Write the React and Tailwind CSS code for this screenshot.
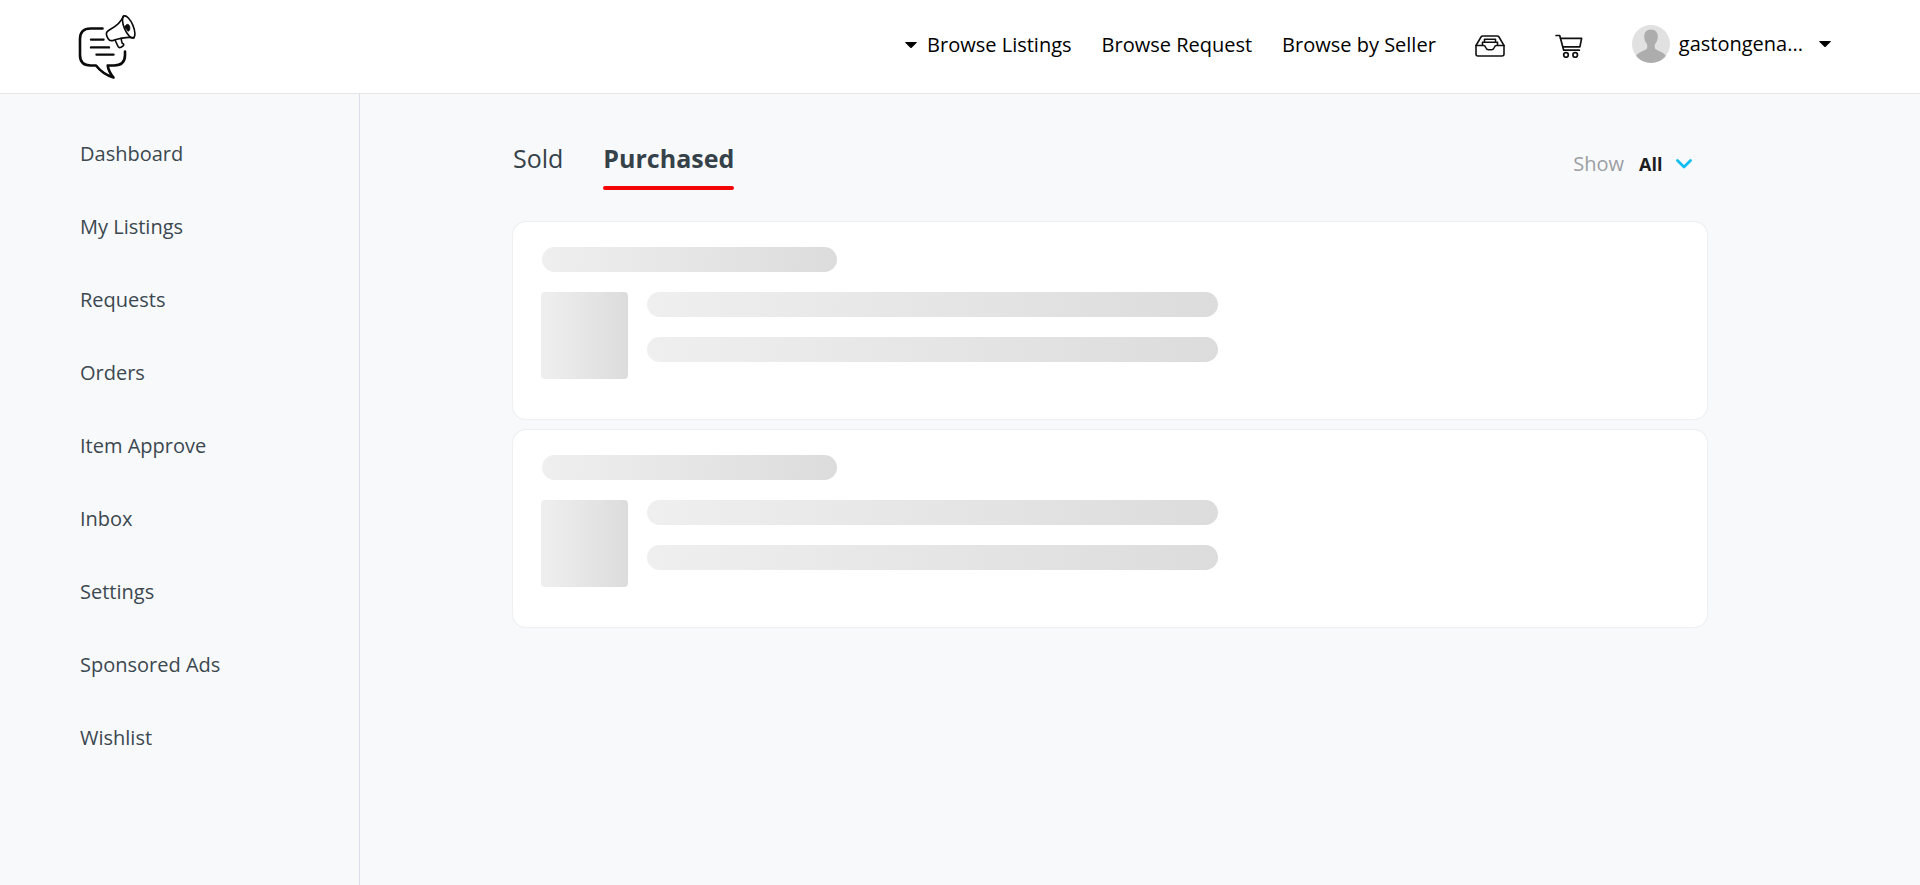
import React from "react";

const NAV = [
  "Dashboard",
  "My Listings",
  "Requests",
  "Orders",
  "Item Approve",
  "Inbox",
  "Settings",
  "Sponsored Ads",
  "Wishlist",
];

function Logo() {
  return (
    <svg viewBox="0 0 60 66" className="h-[66px] w-[60px]" fill="none" stroke="#0a0a0a" strokeLinecap="round" strokeLinejoin="round" aria-hidden="true">
      <path d="M24.5 15.5H12.5Q2 15.5 2 26V42Q2 52.5 12.5 52.5H18C23 59 29 62.5 35.5 64.5C32.5 61 30.3 57 29.7 52.5H36Q47 52.5 47 42V38.5" strokeWidth="2.6" />
      <path d="M13 26.6H25.5M13 34.4H31M18.5 41.6H35.5" strokeWidth="2.4" />
      <path d="M45.5 3C43 9.5 38.5 13 32.5 16.2C28.5 18.5 27.5 20 29 23.5C30.5 27.5 32 28 35.5 27.3C42 25.3 49 23.5 56 24.8" strokeWidth="1.7" />
      <ellipse cx="50.7" cy="13.9" rx="4.5" ry="11.8" transform="rotate(-23 50.7 13.9)" strokeWidth="1.6" />
      <path d="M37 27L40 33.3Q41 35.2 43 34.2L45 33Q46.3 32.2 45.5 30.8L44.3 30.4C43.6 28.7 43.3 27.3 43.2 25.3" strokeWidth="1.6" />
      <path d="M46.5 15C46.5 12.5 49.5 10 51 12C52.5 14 52.3 17.5 50.5 18.3C49.5 18.3 48.6 17 48 15.6Z" fill="#0a0a0a" strokeWidth="0.6" />
    </svg>
  );
}

function Caret() {
  return (
    <svg viewBox="0 0 12 6" className="h-[6px] w-[12px] shrink-0" fill="#000" aria-hidden="true">
      <path d="M0.5 0H11.5Q12 0.3 11.7 0.7L6.7 5.7Q6 6.2 5.3 5.7L0.3 0.7Q0 0.3 0.5 0Z" />
    </svg>
  );
}

function InboxIcon() {
  return (
    <svg viewBox="0 0 30 22" className="h-[22px] w-[30px]" fill="none" stroke="#111" strokeWidth="1.6" strokeLinejoin="round" strokeLinecap="round" aria-hidden="true">
      <path d="M1 10.5L6 2Q6.600 1 7.800 1H22.200Q23.400 1 24 2L29 10.500V19Q29 21 27 21H3Q1 21 1 19Z" />
      <path d="M1 10.500H8.500Q10 10.500 10.600 12.300Q11.500 14.700 13.500 14.700H16.500Q18.500 14.700 19.400 12.300Q20 10.500 21.500 10.500H29" />
      <path d="M9.500 4.200H20.500V7M9.500 4.200V7M7.500 10V7.200H22.500V10" />
    </svg>
  );
}

function CartIcon() {
  return (
    <svg viewBox="0 0 28 24" className="h-[24px] w-[28px]" fill="none" stroke="#111" strokeWidth="1.7" strokeLinejoin="round" strokeLinecap="round" aria-hidden="true">
      <path d="M1 1.500H4.700L8.700 16.200H24.300" />
      <path d="M5.600 4.300H26.600L24.900 12.900H7.800" />
      <circle cx="11" cy="21" r="2.300" />
      <circle cx="20.200" cy="21" r="2.300" />
    </svg>
  );
}

function Avatar() {
  return (
    <svg viewBox="0 0 38 38" className="h-[38px] w-[38px] rounded-full" aria-hidden="true">
      <rect width="38" height="38" fill="#e1e1e1" />
      <path d="M19 4.5C14.5 4.5 12 7.5 12.2 12C12.3 15.5 13.8 17.5 15.2 19.5V23C14.500 26 6 26 3.500 32V38H34.500V32C32 26 23.500 26 22.800 23V19.500C24.200 17.500 25.700 15.500 25.800 12C26 7.500 23.500 4.500 19 4.500Z" fill="#adadad" />
    </svg>
  );
}

function SkeletonCard() {
  const bar = "h-[25px] max-w-full rounded-full bg-[linear-gradient(97deg,#efefef,#dcdcdc)]";
  return (
    <div className="rounded-[13px] bg-white px-7 pt-[25px] pb-[40px] shadow-[0_0_2px_rgba(0,0,0,0.14)]">
      <div className={`${bar} ml-px w-[295px]`} />
      <div className="mt-5 flex gap-[19px]">
        <div className="h-[87px] w-[87px] shrink-0 rounded bg-[linear-gradient(90deg,#efefef,#dcdcdc)]" />
        <div className="flex min-w-0 flex-1 flex-col gap-5">
          <div className={`${bar} w-[571px]`} />
          <div className={`${bar} w-[571px]`} />
        </div>
      </div>
    </div>
  );
}

export default function App() {
  return (
    <div className="flex min-h-screen flex-col bg-[#f8f9fb] font-['Open_Sans',sans-serif] text-xl leading-7">
      <header className="flex h-[94px] items-center justify-between border-b border-[#e6e6e6] bg-white pr-[89px] pb-1 pl-[78px] text-black">
        <a href="#home" aria-label="Home" className="pt-0.5">
          <Logo />
        </a>
        <nav className="flex items-center">
          <button type="button" className="flex items-center gap-[10px]">
            <Caret />
            Browse Listings
          </button>
          <a href="#requests" className="ml-[30px]">Browse Request</a>
          <a href="#sellers" className="ml-[30px]">Browse by Seller</a>
          <a href="#inbox" aria-label="Inbox" className="ml-[39px] pt-0.5">
            <InboxIcon />
          </a>
          <a href="#cart" aria-label="Cart" className="ml-[50px] pt-0.5">
            <CartIcon />
          </a>
          <button type="button" className="ml-[49px] flex items-center pb-0.5">
            <Avatar />
            <span className="ml-[9px] mr-4">gastongena...</span>
            <Caret />
          </button>
        </nav>
      </header>

      <div className="flex flex-1">
        <aside className="w-[360px] shrink-0 border-r border-[#dbe0e8] pt-[23px]">
          <ul>
            {NAV.map((item) => (
              <li key={item}>
                <a href="#nav" className="flex h-[73px] items-center pl-20 text-[#3b4850]">
                  {item}
                </a>
              </li>
            ))}
          </ul>
        </aside>

        <main className="min-w-0 flex-1 pt-12 pr-[213px] pl-[153px]">
          <div className="flex items-start justify-between">
            <div role="tablist" className="flex items-start gap-10 text-[25px] leading-8 text-[#36424a]">
              <button type="button" role="tab" aria-selected="false">
                Sold
              </button>
              <button type="button" role="tab" aria-selected="true" className="flex flex-col gap-3 font-bold">
                Purchased
                <span className="h-1 w-full rounded-full bg-[#f40606]" />
              </button>
            </div>
            <div className="mr-[15px] flex items-center pt-2">
              <label htmlFor="show" className="mr-[15px] text-[#9b9ea3]">Show</label>
              <div className="grid items-center">
                <select id="show" className="col-start-1 row-start-1 w-[53px] appearance-none bg-transparent text-lg leading-7 font-bold text-[#1c1e22]">
                  <option>All</option>
                </select>
                <svg viewBox="0 0 16 10" className="pointer-events-none col-start-1 row-start-1 h-[10px] w-[16px] justify-self-end" fill="none" stroke="#0fbdf0" strokeWidth="2.8" strokeLinecap="round" strokeLinejoin="round" aria-hidden="true">
                  <path d="M1.5 1.5L8 8L14.5 1.5" />
                </svg>
              </div>
            </div>
          </div>

          <div className="mt-8 flex flex-col gap-[11px]">
            <SkeletonCard />
            <SkeletonCard />
          </div>
        </main>
      </div>
    </div>
  );
}
